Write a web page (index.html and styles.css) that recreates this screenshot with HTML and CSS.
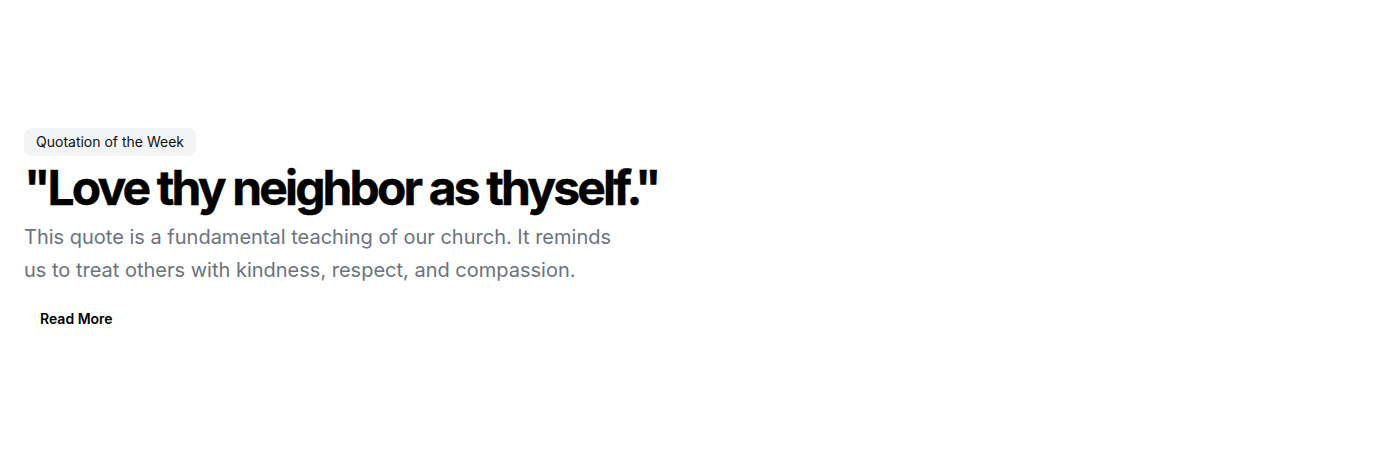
FILE: index.html
```html
<!DOCTYPE html>
<html lang="en">
<head>
<meta charset="utf-8">
<title>Quotation of the Week</title>
<link rel="stylesheet" href="styles.css">
</head>
<body>
<section class="hero">
  <div class="content">
    <div class="text">
      <div class="badge">Quotation of the Week</div>
      <h1 class="title">"Love thy neighbor as thyself."</h1>
      <p class="lead">This quote is a fundamental teaching of our church. It reminds us to treat others with kindness, respect, and compassion.</p>
    </div>
    <div class="actions">
      <a class="btn-ghost" href="#">Read More</a>
    </div>
  </div>
</section>
</body>
</html>
```

FILE: styles.css
```css
* { box-sizing: border-box; }
html, body { margin: 0; padding: 0; background: #fff; }
body { font-family: Inter, "Noto Sans", sans-serif; color: #000; }
.hero {
  height: 465px;
  padding: 128px 24px 0;
}
.content {
  display: flex;
  flex-direction: column;
  gap: 12px;
}
.text {
  display: flex;
  flex-direction: column;
  align-items: flex-start;
  gap: 8px;
}
.badge {
  display: inline-block;
  background: #f3f4f6;
  border-radius: 8px;
  padding: 4px 12px;
  font-size: 14px;
  line-height: 20px;
  color: #111;
}
.title {
  margin: 0;
  font-size: 48px;
  line-height: 1;
  font-weight: 700;
  letter-spacing: -0.06em;
  -webkit-text-stroke: 0.4px #000;
}
.lead {
  margin: 1px 0 0;
  max-width: 600px;
  font-size: 20px;
  line-height: 32.5px;
  color: #6b7280;
}
.actions { display: flex; }
.btn-ghost {
  display: inline-flex;
  align-items: center;
  height: 40px;
  padding: 0 16px;
  border-radius: 6px;
  font-size: 14px;
  font-weight: 600;
  color: #000;
  text-decoration: none;
}
```
